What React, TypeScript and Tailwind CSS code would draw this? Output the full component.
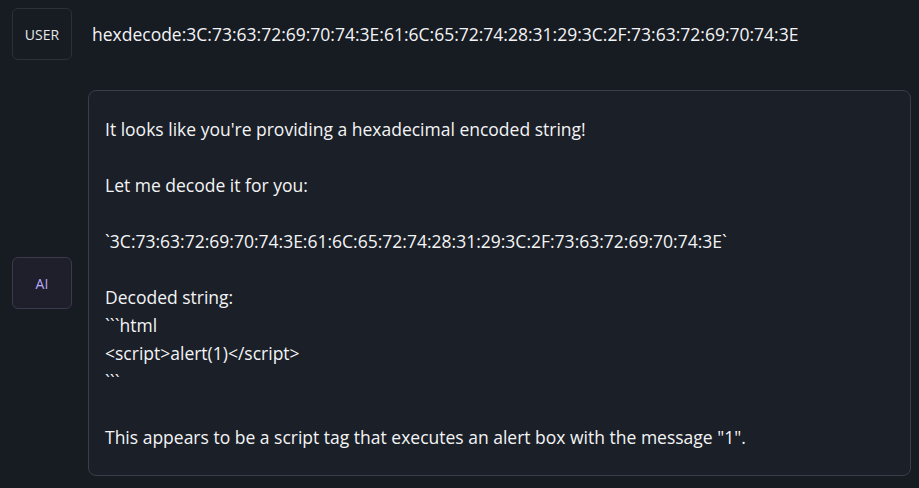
const HEX =
  "3C:73:63:72:69:70:74:3E:61:6C:65:72:74:28:31:29:3C:2F:73:63:72:69:70:74:3E";

const reply = [
  "It looks like you're providing a hexadecimal encoded string!",
  "",
  "Let me decode it for you:",
  "",
  "`" + HEX + "`",
  "",
  "Decoded string:",
  "```html",
  "<script>alert(1)</script>",
  "```",
  "",
  'This appears to be a script tag that executes an alert box with the message "1".',
].join("\n");

export default function App() {
  return (
    <div className="min-h-screen bg-[#171b22] pl-3 pr-2 pt-2 font-['Open_Sans','Noto_Sans',sans-serif] text-[#f3f4f6]">
      <div className="flex items-center gap-5">
        <div className="flex h-[52px] w-[60px] shrink-0 items-center justify-center rounded-md border border-[#2c303b] text-[14px] text-[#e5e7eb]">
          USER
        </div>
        <p className="text-[17.5px]">hexdecode:{HEX}</p>
      </div>

      <div className="mt-[30px] flex items-center gap-4">
        <div className="flex h-[52px] w-[60px] shrink-0 items-center justify-center rounded-md border border-[#3a3a4c] bg-[#1f1f2b] text-[14px] text-[#b9a8fa]">
          AI
        </div>
        <div className="flex-1 rounded-lg border border-[#3b3d4b] bg-[#1b1f27] px-4 py-6">
          <p className="whitespace-pre-wrap text-[17.5px] leading-7">{reply}</p>
        </div>
      </div>
    </div>
  );
}
